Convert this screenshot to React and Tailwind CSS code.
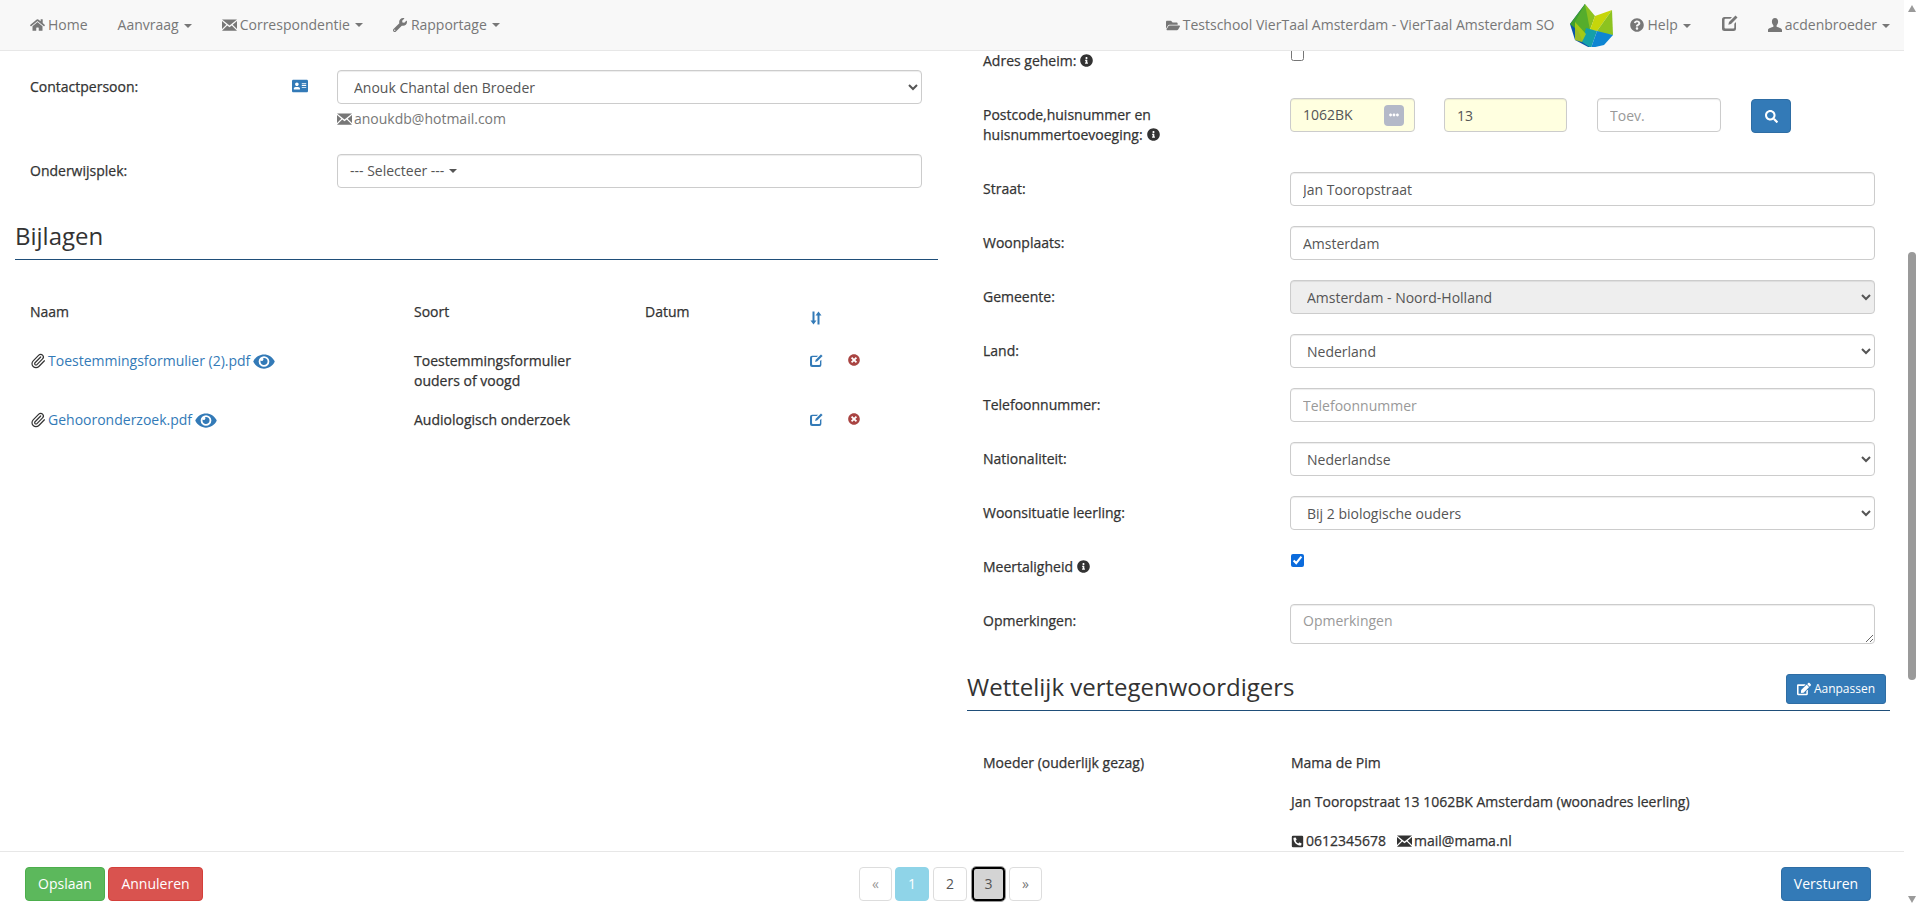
import { Paperclip } from 'lucide-react';
import {
  FaHome, FaWrench, FaFolderOpen, FaQuestionCircle, FaEdit, FaAddressCard,
  FaInfoCircle, FaSearch, FaEye, FaTimesCircle, FaPhoneSquareAlt, FaEllipsisH,
} from 'react-icons/fa';

const Envelope = ({ className }) => (
  <svg viewBox="0 0 16 12" className={className} fill="currentColor">
    <path d="M0 0h16L8 6.400z" />
    <path d="M0 1.800v8.400l4.600-4.600zM16 1.800v8.400l-4.600-4.600z" />
    <path d="M0 12l5.600-5.400L8 8.400l2.400-1.800L16 12z" />
  </svg>
);

const UserIcon = ({ className }) => (
  <svg viewBox="0 0 14 14" className={className} fill="currentColor">
    <path d="M7 0c2 0 3.100 1.500 3.100 3.600 0 1.600-.7 3-1.500 3.800v1.300c1.400.6 5.400 1.400 5.400 3.200V14H0v-2.100c0-1.800 4-2.600 5.400-3.200V7.400C4.600 6.600 3.900 5.200 3.900 3.600 3.900 1.500 5 0 7 0z" />
  </svg>
);

const SortIcon = ({ className }) => (
  <svg viewBox="0 0 12 14" className={className} fill="currentColor">
    <path d="M2.500 0.500h2v9h2l-3 4-3-4h2z" />
    <path d="M7.500 13.500h2v-9h2l-3-4-3 4h2z" />
  </svg>
);

// thick rounded box with a pencil coming out of the top right corner
const EditIcon = ({ className }) => (
  <svg viewBox="0 0 16 16" className={className} fill="currentColor">
    <path d="M2.500 2H10L8.300 3.700H3.500a1 1 0 0 0-1 1v7.800a1 1 0 0 0 1 1h7.800a1 1 0 0 0 1-1V8.700L14 7v6.500a2.500 2.500 0 0 1-2.500 2.500h-9A2.500 2.500 0 0 1 0 13.500v-9A2.500 2.500 0 0 1 2.500 2z" />
    <path d="M13.500 0.500L15.500 2.500 9 9 6.300 9.700 7 7z" />
  </svg>
);

const Caret = () => (
  <span className="ml-[5px] inline-block w-0 h-0 align-middle border-x-4 border-x-transparent border-t-4 border-t-current" />
);

const Logo = () => (
  <svg viewBox="0 0 43 43" className="w-[43px] h-[43px]">
    <polygon points="15,0 0,20 5,36 20,44 16,24" fill="#0b55a8" />
    <polygon points="15,0 0,20 12,30 16,24" fill="#3f9f2f" />
    <polygon points="15,0 25,12 20,26 16,24" fill="#8cc21f" />
    <polygon points="15,0 20,26 12,36 5,18" fill="#55ad2c" />
    <polygon points="25,12 42,6 27,27 20,26" fill="#c6d60a" />
    <polygon points="42,6 43,31 33,30 27,27" fill="#8dc31f" />
    <polygon points="16,24 27,27 21,44 12,38" fill="#15a0a8" />
    <polygon points="27,27 43,31 34,41 21,44" fill="#0e85d2" />
    <polygon points="5,18 16,30 12,38 5,36" fill="#b5cf10" opacity="0.85" />
  </svg>
);

const fieldClass = 'rounded border border-[#ccc] px-3 text-sm text-[#555] shadow-[inset_0_1px_1px_rgba(0,0,0,0.075)] placeholder:text-[#999] outline-none';
const inputClass = `h-[34px] ${fieldClass}`;
const darkText = '[-webkit-text-stroke:0.25px_#333]';

const FormRow = ({ label, children, className = '', labelWidth = 'w-[307px]' }) => (
  <div className={`flex pl-4 min-h-[34px] ${className}`}>
    <div className={`${labelWidth} shrink-0 pt-[7px] leading-5 ${darkText}`}>{label}</div>
    <div className="flex-1 min-w-0">{children}</div>
  </div>
);

const TextField = ({ label, value, placeholder }) => (
  <FormRow label={label}>
    <input readOnly value={value} placeholder={placeholder} className={`${inputClass} w-[585px] block bg-white`} />
  </FormRow>
);

const SelectField = ({ label, value, disabled }) => (
  <FormRow label={label}>
    <select
      disabled={disabled}
      defaultValue={value}
      className={`${inputClass} w-[585px] block ${disabled ? 'bg-[#eee] opacity-100' : 'bg-white'}`}
    >
      <option>{value}</option>
    </select>
  </FormRow>
);

const Info = () => <FaInfoCircle className="inline-block w-[13px] h-[13px] ml-1 text-[#333] align-[-1px]" />;

const SectionTitle = ({ title, action, className = '' }) => (
  <div className={`flex items-end justify-between border-b border-[#1f4e79] pb-[6px] ${className}`}>
    <h2 className="text-2xl leading-[34px] font-normal text-[#333]">{title}</h2>
    {action}
  </div>
);

const Attachment = ({ name, kind }) => (
  <>
    <div className="flex items-center text-[#337ab7] h-5">
      <Paperclip size={16} strokeWidth={1.8} className="text-[#333] mr-[2px] shrink-0" />
      <span>{name}</span>
      <FaEye className="w-[22px] h-[19px] ml-[3px]" />
    </div>
    <div className={darkText}>{kind}</div>
    <div />
    <div className="flex h-5 -mt-px items-center"><EditIcon className="w-[13px] h-[13px] text-[#337ab7]" /></div>
    <div className="flex h-5 -mt-px items-center"><FaTimesCircle className="w-3 h-3 text-[#a94442]" /></div>
  </>
);

const PageButton = ({ children, className = '' }) => (
  <div className={`w-[33px] h-[34px] rounded border flex items-center justify-center ${className}`}>{children}</div>
);

export default function App() {
  return (
    <div className="flex h-[911px] w-full overflow-hidden bg-white text-sm text-[#333] font-['Open_Sans',sans-serif]">
      <div className="flex flex-1 min-w-0 flex-col">
        {/* Top menu */}
        <nav className="z-10 flex h-[51px] shrink-0 items-center justify-between border-b border-[#e7e7e7] bg-[#f8f8f8] pl-[30px] pr-[14px] text-[#777]">
          <div className="flex items-center">
            <span className="flex items-center"><FaHome className="w-[15px] h-[14px] mr-[3px]" />Home</span>
            <span className="ml-[30px]">Aanvraag<Caret /></span>
            <span className="ml-[30px] flex items-center"><Envelope className="w-[15px] h-[12px] mr-[3px]" />Correspondentie<Caret /></span>
            <span className="ml-[30px] flex items-center"><FaWrench className="w-[14px] h-[14px] mr-[4px]" />Rapportage<Caret /></span>
          </div>
          <div className="flex items-center">
            <FaFolderOpen className="w-[14px] h-[13px] mr-[3px]" />
            <span>Testschool VierTaal Amsterdam - VierTaal Amsterdam SO</span>
            <span className="ml-4 mr-[17px]"><Logo /></span>
            <FaQuestionCircle className="w-[14px] h-[14px] mr-[3px]" />
            <span>Help<Caret /></span>
            <EditIcon className="w-4 h-4 ml-[31px] -mt-[5px]" />
            <UserIcon className="w-[14px] h-[14px] ml-[30px] mr-[3px]" />
            <span>acdenbroeder<Caret /></span>
          </div>
        </nav>

        <main className="flex flex-1 min-h-0 overflow-hidden">
          {/* Left column */}
          <section className="w-[952px] shrink-0 pl-[15px] pr-[14px] pt-[19px]">
            <div className="flex pl-[15px]">
              <div className={`w-[262px] pt-[7px] leading-5 ${darkText}`}>Contactpersoon:</div>
              <div className="w-[45px] pt-2"><FaAddressCard className="w-4 h-4 text-[#337ab7]" /></div>
              <div className="w-[585px]">
                <select defaultValue="Anouk Chantal den Broeder" className={`${inputClass} w-full block bg-white`}>
                  <option>Anouk Chantal den Broeder</option>
                </select>
                <div className="mt-[5px] flex items-center leading-5 text-[#777]">
                  <Envelope className="w-[15px] h-[12px] mr-[2px]" />anoukdb@hotmail.com
                </div>
              </div>
            </div>
            <div className="mt-[25px] flex pl-[15px]">
              <div className={`w-[307px] pt-[7px] leading-5 ${darkText}`}>Onderwijsplek:</div>
              <div className={`${inputClass} w-[585px] flex items-center bg-white text-[#333]`}>--- Selecteer ---<Caret /></div>
            </div>

            <SectionTitle title="Bijlagen" className="mt-[31px]" />

            <div className="mt-[42px] grid grid-cols-[384px_231px_165px_38px_1fr] gap-y-[19px] pl-[15px] leading-5">
              <div className={darkText}>Naam</div>
              <div className={darkText}>Soort</div>
              <div className={darkText}>Datum</div>
              <div className="pt-[9px] pb-[7px]"><SortIcon className="w-3 h-[14px] text-[#337ab7]" /></div>
              <div />
              <Attachment name="Toestemmingsformulier (2).pdf" kind={<>Toestemmingsformulier<br />ouders of voogd</>} />
              <Attachment name="Gehooronderzoek.pdf" kind="Audiologisch onderzoek" />
            </div>
          </section>

          {/* Right column */}
          <section className="w-[952px] shrink-0 pl-[15px] pr-[14px] -mt-[7px]">
            <div className="flex flex-col gap-5">
              <FormRow label={<>Adres geheim:<Info /></>}>
                <input type="checkbox" className="block ml-px mt-1 w-[13px] h-[13px]" />
              </FormRow>
              <FormRow label={<>Postcode,huisnummer en<br />huisnummertoevoeging:<Info /></>} className="h-[54px]">
                <div className="flex items-start">
                  <div className={`${inputClass} w-[125px] bg-[#ffffe0] flex items-center justify-between pr-[10px]`}>
                    1062BK
                    <span className="w-5 h-[21px] rounded-sm bg-[#b4b9c8] flex items-center justify-center"><FaEllipsisH className="w-[10px] h-[10px] text-white" /></span>
                  </div>
                  <input readOnly value="13" className={`${inputClass} w-[123px] ml-[29px] bg-[#ffffe0]`} />
                  <input readOnly placeholder="Toev." className={`${inputClass} w-[124px] ml-[30px] bg-white`} />
                  <button className="w-10 h-[34px] ml-[30px] mt-px rounded bg-[#337ab7] border border-[#2e6da4] flex items-center justify-center text-white">
                    <FaSearch className="w-[13px] h-[13px]" />
                  </button>
                </div>
              </FormRow>
              <TextField label="Straat:" value="Jan Tooropstraat" />
              <TextField label="Woonplaats:" value="Amsterdam" />
              <SelectField label="Gemeente:" value="Amsterdam - Noord-Holland" disabled />
              <SelectField label="Land:" value="Nederland" />
              <TextField label="Telefoonnummer:" value="" placeholder="Telefoonnummer" />
              <SelectField label="Nationaliteit:" value="Nederlandse" />
              <SelectField label="Woonsituatie leerling:" value="Bij 2 biologische ouders" />
              <FormRow label={<>Meertaligheid<Info /></>}>
                <input type="checkbox" defaultChecked className="block ml-px mt-1 w-[13px] h-[13px] accent-[#0b6bdc]" />
              </FormRow>
              <FormRow label="Opmerkingen:">
                <textarea readOnly placeholder="Opmerkingen" className={`${fieldClass} w-[585px] h-10 py-[6px] block resize-y bg-white`} />
              </FormRow>
            </div>

            <SectionTitle
              title="Wettelijk vertegenwoordigers"
              className="mt-[26px]"
              action={
                <button className="mr-[4px] h-[30px] w-[100px] rounded-[3px] bg-[#337ab7] border border-[#2e6da4] text-white text-xs flex items-center justify-center">
                  <FaEdit className="w-[14px] h-[14px] mr-[3px]" />Aanpassen
                </button>
              }
            />

            <div className={`mt-[42px] flex pl-4 leading-5 ${darkText}`}>
              <div className="w-[308px] shrink-0">Moeder (ouderlijk gezag)</div>
              <div className="flex flex-col gap-[19px]">
                <div>Mama de Pim</div>
                <div>Jan Tooropstraat 13 1062BK Amsterdam (woonadres leerling)</div>
                <div className="flex items-center">
                  <FaPhoneSquareAlt className="w-[13px] h-[13px] mr-[2px]" />0612345678
                  <Envelope className="w-[15px] h-[12px] ml-[11px] mr-[2px]" />mail@mama.nl
                </div>
              </div>
            </div>
          </section>
        </main>

        {/* Bottom bar */}
        <footer className="z-10 flex h-[60px] shrink-0 border-t border-[#e7e7e7] bg-white pl-[25px] pr-[33px] pt-[15px]">
          <div className="flex w-[834px] gap-[3px] text-white">
            <button className="h-[34px] w-20 rounded bg-[#5cb85c] border border-[#4cae4c]">Opslaan</button>
            <button className="h-[34px] w-[95px] rounded bg-[#d9534f] border border-[#d43f3a]">Annuleren</button>
          </div>
          <div className="flex gap-[4px] text-[#555]">
            <PageButton className="w-[33px] border-[#ddd] text-[#999]">«</PageButton>
            <PageButton className="w-[34px] -ml-px border-[#8fd4e8] bg-[#8fd4e8] text-white">1</PageButton>
            <PageButton className="w-[34px] border-[#ddd]">2</PageButton>
            <PageButton className="ml-px border-2 border-black bg-[#d4d4d4] outline-1 outline-[#999]">3</PageButton>
            <PageButton className="w-[32px] border-[#ddd] text-[#777]">»</PageButton>
          </div>
          <button className="ml-auto h-[34px] w-[90px] rounded bg-[#337ab7] border border-[#2e6da4] text-white">Versturen</button>
        </footer>
      </div>

      {/* Scrollbar */}
      <div className="flex w-4 shrink-0 flex-col items-center bg-white py-1">
        <div className="w-0 h-0 border-x-4 border-x-transparent border-b-[7px] border-b-[#9a9a9a] mt-[1px]" />
        <div className="mt-[240px] h-[428px] w-2 rounded bg-[#9a9a9a]" />
        <div className="mt-auto mb-1 w-0 h-0 border-x-4 border-x-transparent border-t-[7px] border-t-[#9a9a9a]" />
      </div>
    </div>
  );
}
